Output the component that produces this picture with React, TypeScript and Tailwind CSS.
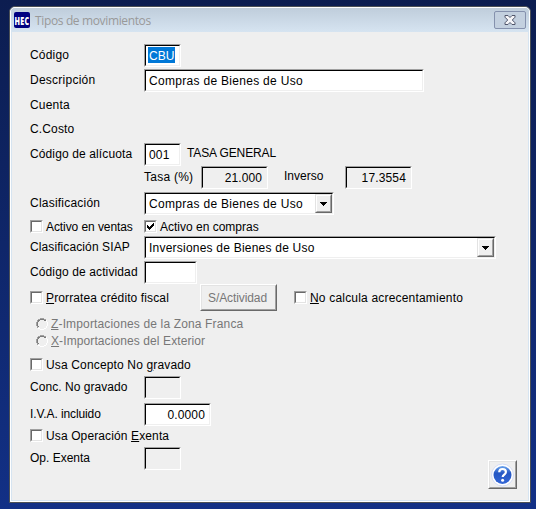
import type { ReactNode } from "react";

function Label({ children, className = "" }: { children: ReactNode; className?: string }) {
  return <span className={`block shrink-0 whitespace-pre leading-4 ${className}`}>{children}</span>;
}

function Field({ children, className = "" }: { children?: ReactNode; className?: string }) {
  return (
    <div className={`h-[23px] shrink-0 border border-t-[#a0a0a0] border-l-[#a0a0a0] border-r-white border-b-white ${className}`}>
      <div className="flex h-full whitespace-pre border border-t-black border-l-black border-r-[#efefef] border-b-[#efefef] pt-0.5 pr-1 pl-[3px] leading-4">
        {children}
      </div>
    </div>
  );
}

function Combo({ children, className = "" }: { children: ReactNode; className?: string }) {
  return (
    <div className={`h-[23px] shrink-0 border border-t-[#a0a0a0] border-l-[#a0a0a0] border-r-white border-b-white bg-white ${className}`}>
      <div className="flex h-full justify-between border border-t-black border-l-black border-r-[#efefef] border-b-[#efefef] pl-[3px]">
        <span className="whitespace-pre pt-0.5 leading-4">{children}</span>
        <div className="h-[19px] w-[17px] border border-t-[#e3e3e3] border-l-[#e3e3e3] border-r-[#696969] border-b-[#696969]">
          <div className="flex h-full items-center justify-center border border-t-white border-l-white border-r-[#a0a0a0] border-b-[#a0a0a0] bg-[#efefef]">
            <svg width="7" height="4" viewBox="0 0 7 4" shapeRendering="crispEdges">
              <path d="M0 0h7v1H6v1H5v1H4v1H3V3H2V2H1V1H0z" />
            </svg>
          </div>
        </div>
      </div>
    </div>
  );
}

function Check({ checked = false }: { checked?: boolean }) {
  return (
    <div className="size-[13px] shrink-0 border border-t-[#a0a0a0] border-l-[#a0a0a0] border-r-white border-b-white">
      <div className="size-[11px] border border-t-[#696969] border-l-[#696969] border-r-[#e3e3e3] border-b-[#e3e3e3] bg-white">
        {checked && (
          <svg width="9" height="9" viewBox="0 0 9 9" shapeRendering="crispEdges">
            <path d="M1 3h1v1h1v1h1V4h1V3h1V2h1V1h1v3H7v1H6v1H5v1H4v1H3V7H2V6H1z" />
          </svg>
        )}
      </div>
    </div>
  );
}

function Radio() {
  return (
    <svg width="12" height="12" viewBox="0 0 12 12" className="shrink-0" shapeRendering="crispEdges">
      <path d="M4 0h4v1H4zM2 1h2v1H2zM8 1h2v1H8zM1 2h1v2H1zM0 4h1v4H0zM1 8h1v2H1z" fill="#a0a0a0" />
      <path d="M4 1h4v1H4zM2 2h2v1H2zM8 2h2v1H8zM2 3h1v1H2zM1 4h1v4H1zM2 8h1v1H2z" fill="#7a7a7a" />
      <path d="M10 2h1v2h-1zM11 4h1v4h-1zM10 8h1v2h-1zM8 10h2v1H8zM4 11h4v1H4zM2 10h2v1H2z" fill="#fff" />
    </svg>
  );
}

export default function App() {
  return (
    <div className="h-[509px] w-[536px] overflow-hidden bg-linear-to-b from-[#0c1d50] to-[#123086] pt-1.5 pl-[9px] font-['Liberation_Sans',Arial,sans-serif] text-[12px] text-black">
      <div className="h-[497px] w-[522px] rounded-t-md border border-[#4b5055] bg-[#d6e4f1]">
        <div className="flex h-full flex-col rounded-t-[5px] border border-white">
          <div className="flex h-6 shrink-0 items-start rounded-t bg-linear-to-b from-[#bfcddb] to-[#d6e4f1] pl-[3px]">
            <div className="mt-1 flex size-4 items-end justify-center rounded-xs bg-[#000080]">
              <span className="scale-x-[0.68] font-['Open_Sans',sans-serif] text-[10.5px] leading-[13px] font-extrabold tracking-[0.5px] text-white">HEC</span>
            </div>
            <span className="mt-[5px] ml-[5px] font-['Open_Sans',sans-serif] text-[12px] leading-4 tracking-[-0.36px] text-[#999]">Tipos de movimientos</span>
            <div className="mt-[3px] mr-[3px] ml-auto flex h-[18px] w-8 items-center justify-center rounded-xs border border-[#8591ad] bg-[#c3d0df]">
              <svg width="12" height="10" viewBox="0 0 12 10">
                <path d="M1 .5h3l2 2 2-2h3v1.7L8.3 5 11 7.8v1.7H8l-2-2-2 2H1V7.8L3.7 5 1 2.2z" fill="#f5f5f8" stroke="#50566b" />
              </svg>
            </div>
          </div>
          <div className="mx-px mb-px flex grow bg-[#efefef] pl-[18px]">
            <div className="flex w-[440px] flex-col pt-3">
              <div className="flex h-[23px] items-start">
                <Label className="mt-[3px] w-[114px] tracking-[0.2px]">Código</Label>
                <Field className="w-[37px] bg-white">
                  <span className="-mt-px -ml-px h-4 bg-[#0078d7] px-px pt-px leading-4 text-white">CBU</span>
                </Field>
              </div>
              <div className="mt-0.5 flex h-[23px] items-start">
                <Label className="mt-[3px] w-[114px] tracking-[0.25px]">Descripción</Label>
                <Field className="w-[280px] bg-white"><span className="tracking-[0.3px]">Compras de Bienes de Uso</span></Field>
              </div>
              <Label className="mt-[5px] tracking-[0.2px]">Cuenta</Label>
              <Label className="mt-2 tracking-[0.15px]">C.Costo</Label>
              <div className="mt-1.5 flex h-[23px] items-start">
                <Label className="mt-[3px] w-[114px] tracking-[0.12px]">Código de alícuota</Label>
                <Field className="w-[37px] bg-white"><span className="tracking-[0.2px]">001</span></Field>
                <Label className="mt-0.5 ml-1.5 tracking-[-0.12px]">TASA GENERAL</Label>
              </div>
              <div className="flex h-[23px] items-start pl-[114px]">
                <Label className="mt-[3px] w-[57px] tracking-[0.25px]">Tasa (%)</Label>
                <Field className="w-[67px]"><span className="ml-auto tracking-[0.1px]">21.000</span></Field>
                <Label className="mt-0.5 ml-4 w-[61px]">Inverso</Label>
                <Field className="w-[67px]"><span className="ml-auto tracking-[0.15px]">17.3554</span></Field>
              </div>
              <div className="mt-[3px] flex h-[23px] items-start">
                <Label className="mt-[3px] w-[114px] tracking-[0.22px]">Clasificación</Label>
                <Combo className="w-[190px]"><span className="tracking-[0.3px]">Compras de Bienes de Uso</span></Combo>
              </div>
              <div className="mt-[5px] flex h-[13px] items-center">
                <div className="flex w-[114px] items-center gap-[3px]">
                  <Check />
                  <Label className="tracking-[-0.08px]">Activo en ventas</Label>
                </div>
                <div className="flex items-center gap-[3px]">
                  <Check checked />
                  <Label>Activo en compras</Label>
                </div>
              </div>
              <div className="mt-[3px] flex h-[23px] items-start">
                <Label className="mt-[3px] w-[114px] tracking-[0.1px]">Clasificación SIAP</Label>
                <Combo className="w-[352px]"><span className="tracking-[0.22px]">Inversiones de Bienes de Uso</span></Combo>
              </div>
              <div className="mt-0.5 flex h-[23px] items-start">
                <Label className="mt-[3px] w-[114px] tracking-[0.12px]">Código de actividad</Label>
                <Field className="w-[53px] bg-white" />
              </div>
              <div className="flex h-[27px] items-center">
                <div className="flex w-[170px] shrink-0 items-center gap-[3px]">
                  <Check />
                  <Label className="tracking-[0.12px]"><u>P</u>rorratea crédito fiscal</Label>
                </div>
                <button className="h-[27px] w-[77px] shrink-0 border border-t-white border-l-white border-r-[#696969] border-b-[#696969]">
                  <span className="flex h-full items-center justify-center border border-t-[#e3e3e3] border-l-[#e3e3e3] border-r-[#a0a0a0] border-b-[#a0a0a0] pr-0.5 leading-4 tracking-[-0.1px] text-[#777]">S/Actividad</span>
                </button>
                <div className="ml-[17px] flex items-center gap-[3px]">
                  <Check />
                  <Label className="tracking-[0.19px]"><u>N</u>o calcula acrecentamiento</Label>
                </div>
              </div>
              <div className="mt-[5px] ml-1.5 flex h-[34px] flex-col gap-px text-[#777]">
                <div className="flex h-4 items-center gap-[3px]"><Radio /><Label className="tracking-[0.15px]"><u>Z</u>-Importaciones de la Zona Franca</Label></div>
                <div className="flex h-4 items-center gap-[3px]"><Radio /><Label className="tracking-[0.1px]"><u>X</u>-Importaciones del Exterior</Label></div>
              </div>
              <div className="mt-2 flex h-[13px] items-center gap-[3px]">
                <Check />
                <Label className="tracking-[0.15px]">Usa Concepto No <u>g</u>ravado</Label>
              </div>
              <div className="mt-[5px] flex h-[23px] items-start">
                <Label className="mt-[3px] w-[114px] tracking-[0.05px]">Conc. No gravado</Label>
                <Field className="w-[37px]" />
              </div>
              <div className="mt-1 flex h-[23px] items-start">
                <Label className="mt-[3px] w-[114px] tracking-[-0.1px]">I.V.A. incluido</Label>
                <Field className="w-[67px] bg-white"><span className="ml-auto tracking-[0.15px]">0.0000</span></Field>
              </div>
              <div className="mt-[3px] flex h-[13px] items-center gap-[3px]">
                <Check />
                <Label className="tracking-[0.12px]">Usa Operación <u>E</u>xenta</Label>
              </div>
              <div className="mt-[5px] flex h-[23px] items-start">
                <Label className="mt-[3px] w-[114px]">Op. Exenta</Label>
                <Field className="w-[37px]" />
              </div>
            </div>
            <button className="mr-[11px] mb-[11px] ml-auto size-[29px] shrink-0 self-end border border-t-white border-l-white border-r-[#696969] border-b-[#696969]">
              <span className="flex h-full items-center justify-center border border-t-[#e3e3e3] border-l-[#e3e3e3] border-r-[#a0a0a0] border-b-[#a0a0a0]">
                <svg width="24" height="24" viewBox="0 0 24 24">
                  <defs>
                    <linearGradient id="help" x1="0" y1="0" x2="0" y2="1">
                      <stop offset="0" stopColor="#6ba4ee" />
                      <stop offset=".4" stopColor="#2557c4" />
                      <stop offset="1" stopColor="#3467d6" />
                    </linearGradient>
                  </defs>
                  <circle cx="11.5" cy="12" r="11" fill="#fff" stroke="#d4dcf5" />
                  <circle cx="11.5" cy="12" r="9" fill="url(#help)" />
                  <path d="M8.2 9.2C8.3 7 9.7 6 11.5 6c2 0 3.4 1.1 3.4 2.9 0 2.7-3.2 2.8-3.2 5.2" fill="none" stroke="#fff" strokeWidth="2.2" />
                  <circle cx="11.6" cy="17.3" r="1.5" fill="#fff" />
                </svg>
              </span>
            </button>
          </div>
        </div>
      </div>
    </div>
  );
}
